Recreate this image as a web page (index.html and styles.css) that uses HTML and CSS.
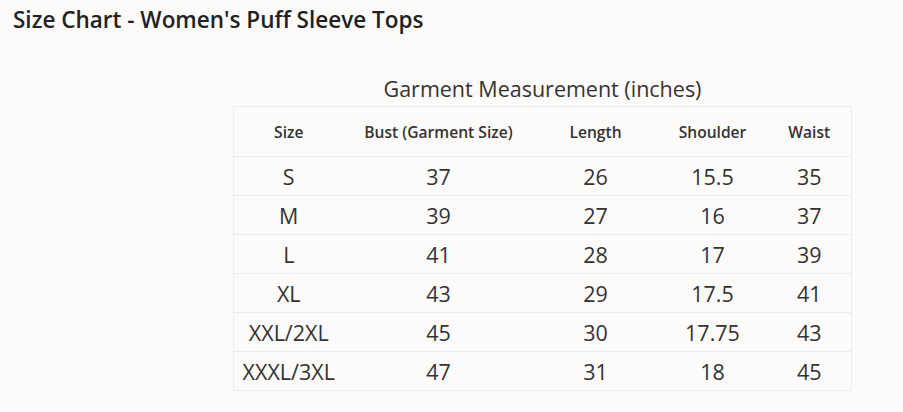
FILE: index.html
```html
<!DOCTYPE html>
<html lang="en">
<head>
<meta charset="utf-8">
<title>Size Chart</title>
<link rel="stylesheet" href="styles.css">
</head>
<body>
<h1 class="title">Size Chart - Women's Puff Sleeve Tops</h1>
<div class="chart-wrap">
<table class="chart">
<caption class="chart-caption">Garment Measurement (inches)</caption>
<colgroup>
<col class="c-size"><col class="c-bust"><col class="c-length"><col class="c-shoulder"><col class="c-waist">
</colgroup>
<thead>
<tr><th>Size</th><th>Bust (Garment Size)</th><th>Length</th><th>Shoulder</th><th>Waist</th></tr>
</thead>
<tbody>
<tr><td>S</td><td>37</td><td>26</td><td>15.5</td><td>35</td></tr>
<tr><td>M</td><td>39</td><td>27</td><td>16</td><td>37</td></tr>
<tr><td>L</td><td>41</td><td>28</td><td>17</td><td>39</td></tr>
<tr><td>XL</td><td>43</td><td>29</td><td>17.5</td><td>41</td></tr>
<tr><td>XXL/2XL</td><td>45</td><td>30</td><td>17.75</td><td>43</td></tr>
<tr><td>XXXL/3XL</td><td>47</td><td>31</td><td>18</td><td>45</td></tr>
</tbody>
</table>
</div>
</body>
</html>
```
FILE: styles.css
```css
html, body {
  margin: 0;
  padding: 0;
  background: #fdfbfa;
  font-family: "Open Sans", "Liberation Sans", sans-serif;
  color: #333;
}
.title {
  margin: 0;
  padding: 6px 0 0 13px;
  font-size: 22.5px;
  font-weight: 600;
  line-height: 28px;
  color: #222;
}
.chart-wrap {
  padding: 41px 0 0 233px;
}
.chart {
  border-collapse: collapse;
  width: 618px;
  table-layout: fixed;
}
.chart-caption {
  font-size: 21.5px;
  line-height: 27px;
  padding-bottom: 4px;
  color: #333;
}
.c-size { width: 110px; }
.c-bust { width: 190px; }
.c-length { width: 124px; }
.c-shoulder { width: 110px; }
.c-waist { width: 84px; }
.chart th, .chart td {
  text-align: center;
  padding: 0;
  border-top: 1px solid #ececec;
  border-bottom: 1px solid #ececec;
}
.chart th:first-child, .chart td:first-child { border-left: 1px solid #ececec; }
.chart th:last-child, .chart td:last-child { border-right: 1px solid #ececec; }
.chart th {
  height: 49px;
  font-size: 15.6px;
  font-weight: 600;
  color: #333;
}
.chart td {
  height: 38px;
  font-size: 21.5px;
  font-weight: 400;
  color: #333;
}
```
